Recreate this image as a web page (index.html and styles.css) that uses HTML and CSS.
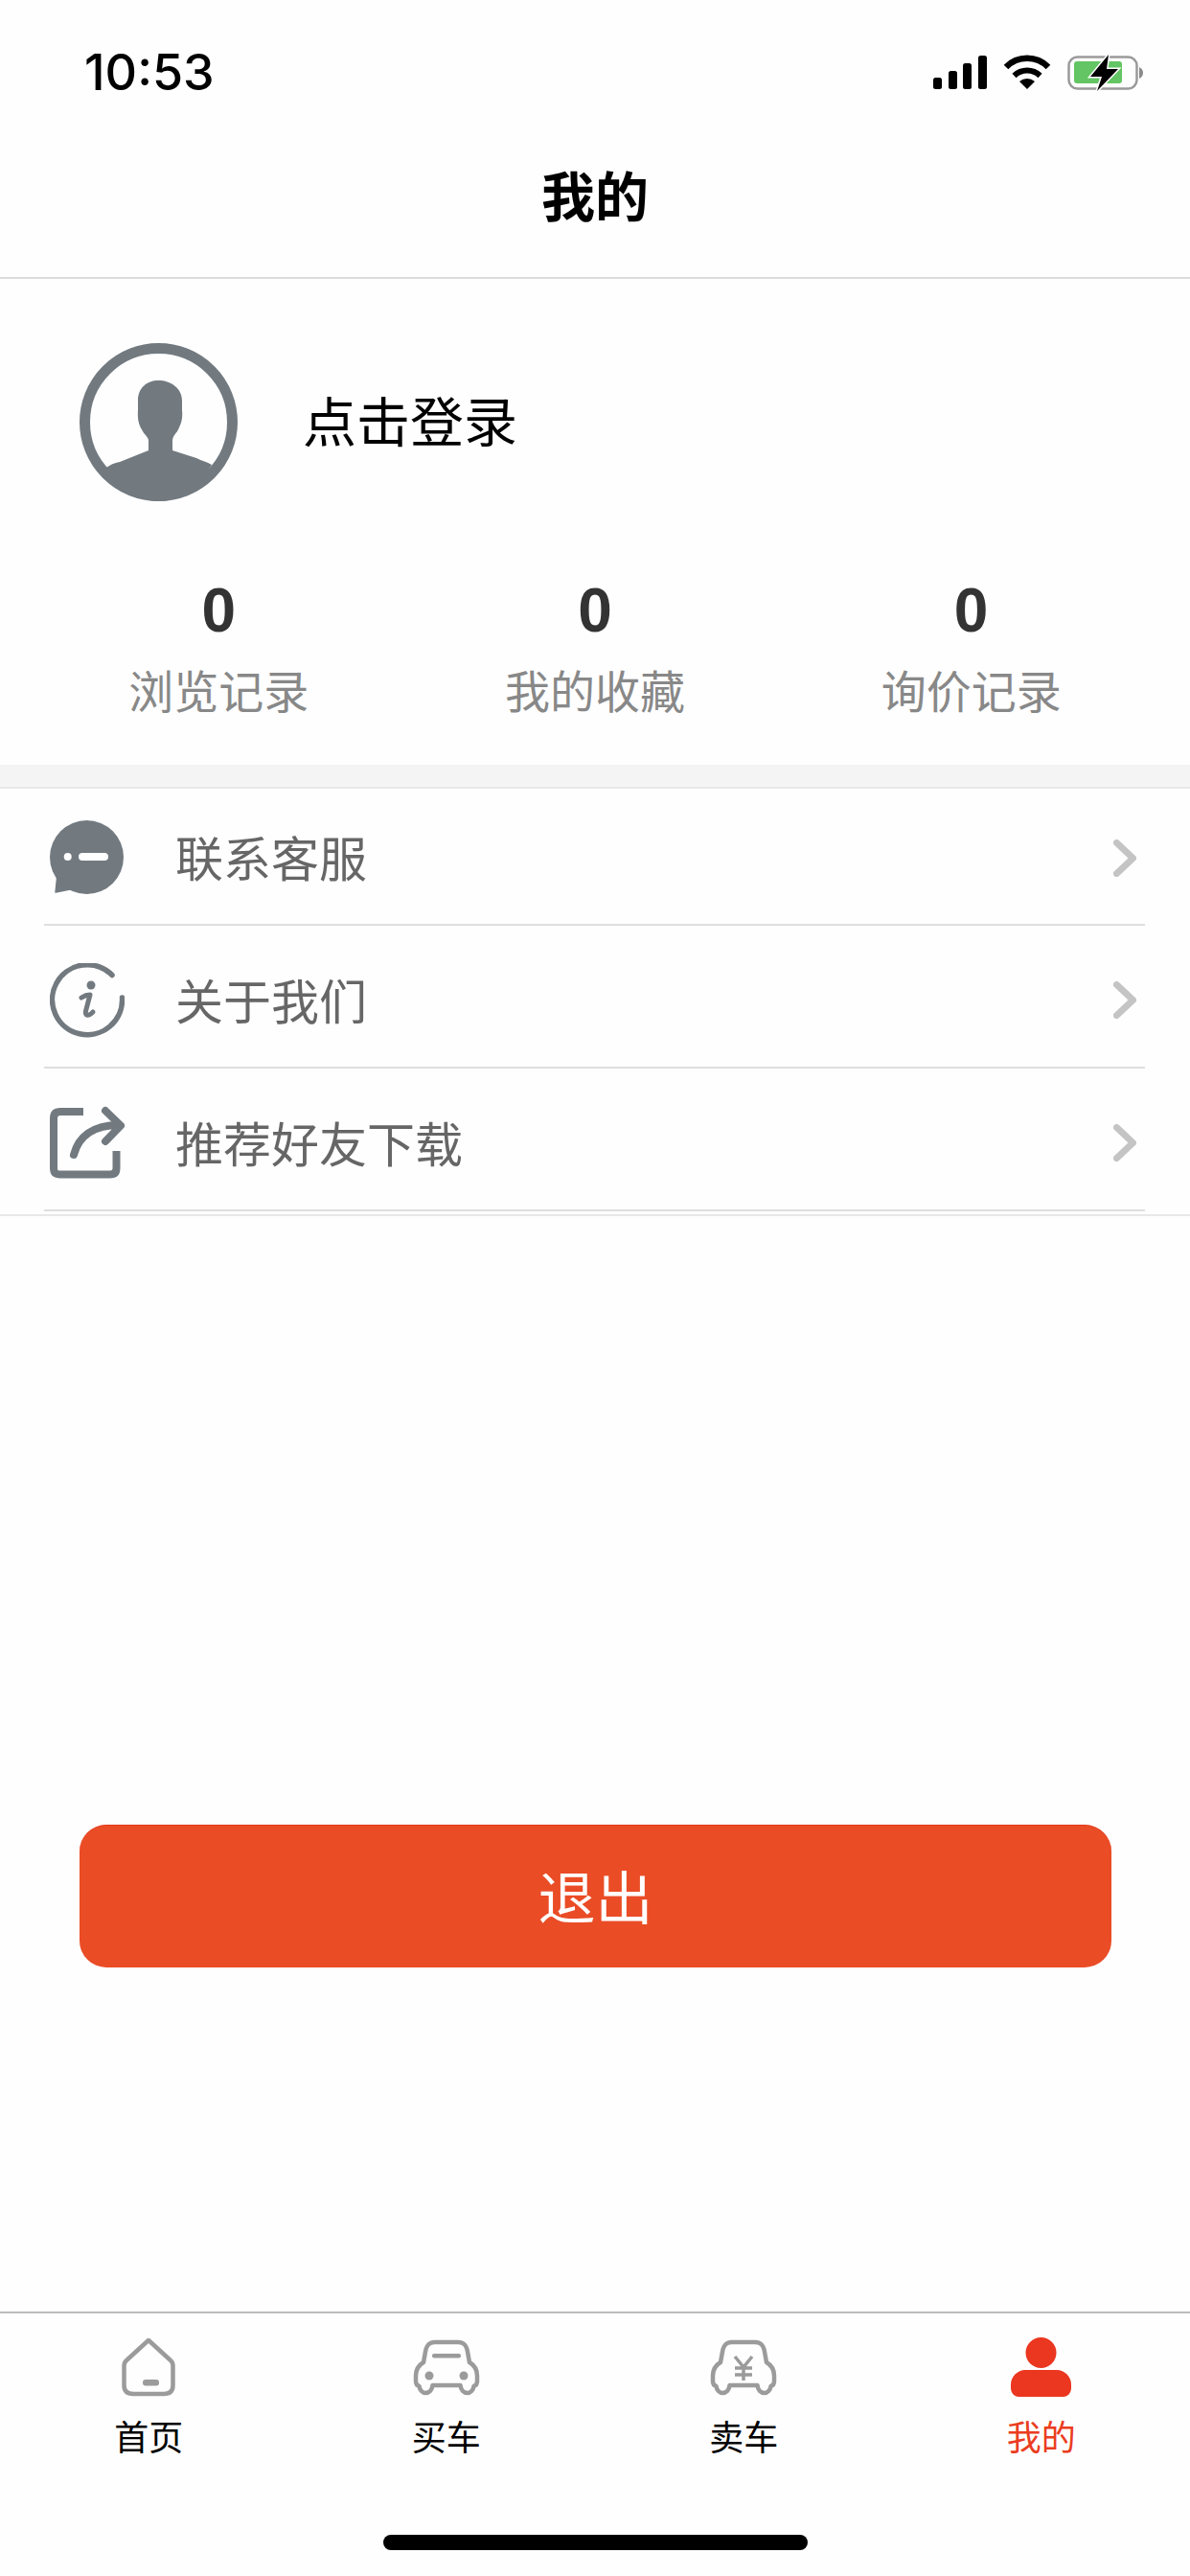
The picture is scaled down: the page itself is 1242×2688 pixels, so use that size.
FILE: index.html
```html
<!DOCTYPE html>
<html>

<head>
    <meta charset="utf-8">
    <link rel="stylesheet" href="styles.css">
</head>

<body>
    <div class="page">
        <!-- Status bar -->
        <div class="status-bar">
            <span class="status-time">10:53</span>
            <div class="status-icons">
                <svg width="56" height="38" viewBox="0 0 56 38">
                    <rect x="0" y="24" width="9" height="12" rx="2.5" />
                    <rect x="16" y="17" width="9" height="19" rx="2.5" />
                    <rect x="31" y="9" width="9" height="27" rx="2.5" />
                    <rect x="47" y="1" width="9" height="35" rx="2.5" />
                </svg>
                <svg width="50" height="38" viewBox="0 0 50 38">
                    <path d="M3 13A31 31 0 0 1 47 13" fill="none" stroke="#000" stroke-width="6.5" />
                    <path d="M11.5 22A19.5 19.5 0 0 1 38.5 22" fill="none" stroke="#000" stroke-width="6" />
                    <path d="M25 36L17 28A12 12 0 0 1 33 28Z" />
                </svg>
                <svg width="80" height="38" viewBox="0 0 80 38">
                    <rect x="1.5" y="2.5" width="71" height="33" rx="9" fill="none" stroke="#9a9a9a" stroke-width="2.5" />
                    <rect x="7" y="7" width="50" height="23" rx="3" fill="#63c563" />
                    <path d="M75 13Q79 15 79 19Q79 23 75 25Z" fill="#8a8a8a" />
                    <polygon points="43,0 24,23 36,23 31,38 53,15 41,15" stroke="#fff" stroke-width="3" paint-order="stroke" />
                </svg>
            </div>
        </div>

        <div class="nav-bar">我的</div>

        <!-- Login block -->
        <div class="profile">
            <svg class="avatar" width="165" height="165" viewBox="0 0 165 165">
                <circle cx="82.5" cy="82.5" r="77" fill="none" stroke="#727a80" stroke-width="11" />
                <path d="M82.5 39C70 39 61 47 61 60L61 70C60 84 64 88 66 92C68 96 72 98 72 102L72 112L42 124C36 125 32 127 28 130C45 152 65 165 82.5 165C105 165 122 152 138 127C133 124 128 123 122 120L97 112L97 102C97 96 102 94 104 88C106 84 108 78 107 70L107 60C107 47 95 39 82.5 39Z" fill="#727a80" />
            </svg>
            <span class="login-text">点击登录</span>
        </div>

        <div class="stats">
            <div class="stat">
                <div class="stat-num">0</div>
                <div class="stat-label">浏览记录</div>
            </div>
            <div class="stat">
                <div class="stat-num">0</div>
                <div class="stat-label">我的收藏</div>
            </div>
            <div class="stat">
                <div class="stat-num">0</div>
                <div class="stat-label">询价记录</div>
            </div>
        </div>

        <div class="band"></div>

        <!-- Menu -->
        <div class="menu">
            <div class="menu-row">
                <svg class="menu-icon" width="78" height="78" viewBox="0 0 78 78">
                    <circle cx="38.5" cy="38.5" r="38.5" fill="#727a80" />
                    <path d="M8 56L6 75L26 71Z" fill="#727a80" stroke="#727a80" stroke-width="1.5" stroke-linejoin="round" />
                    <circle cx="18.7" cy="38" r="4" fill="#fff" />
                    <rect x="30" y="34" width="31" height="8" rx="4" fill="#fff" />
                </svg>
                <span class="menu-text">联系客服</span>
                <svg class="chevron" width="24" height="39" viewBox="0 0 24 39">
                    <path d="M3.5 3.5L20.5 19.5L3.5 35.5" />
                </svg>
            </div>
            <div class="menu-row">
                <svg class="menu-icon" width="78" height="78" viewBox="0 0 78 78">
                    <path d="M75.5 36A36.5 36.5 0 1 1 65 12.5" fill="none" stroke="#727a80" stroke-width="5.5" stroke-linecap="round" />
                    <circle cx="43" cy="23" r="4.5" fill="#727a80" />
                    <path d="M33 36C36 34 39 33 42 33L37.5 50C36.5 55 40 56 45 51" fill="none" stroke="#727a80" stroke-width="5" stroke-linecap="round" stroke-linejoin="round" />
                </svg>
                <span class="menu-text">关于我们</span>
                <svg class="chevron" width="24" height="39" viewBox="0 0 24 39">
                    <path d="M3.5 3.5L20.5 19.5L3.5 35.5" />
                </svg>
            </div>
            <div class="menu-row">
                <svg class="menu-icon" width="78" height="78" viewBox="0 0 78 78">
                    <path d="M35 6H11Q4 6 4 13V65Q4 71.5 11 71.5H63Q69.5 71.5 69.5 65V47" fill="none" stroke="#727a80" stroke-width="8" />
                    <path d="M25 51C30 32 45 20 72 20M58 5L74 20.5L58 37" fill="none" stroke="#727a80" stroke-width="8" stroke-linecap="round" stroke-linejoin="round" />
                </svg>
                <span class="menu-text">推荐好友下载</span>
                <svg class="chevron" width="24" height="39" viewBox="0 0 24 39">
                    <path d="M3.5 3.5L20.5 19.5L3.5 35.5" />
                </svg>
            </div>
        </div>

        <button class="logout">退出</button>

        <!-- Bottom tabs -->
        <div class="tab-bar">
            <div class="tabs">
                <div class="tab">
                    <div class="tab-icon">
                        <svg width="56" height="62" viewBox="0 0 56 62">
                            <path d="M28 3L51 24Q53.5 26 53.5 30V50Q53.5 59 44 59H12Q2.5 59 2.5 50V30Q2.5 26 5 24Z" fill="none" stroke="#9b9b9b" stroke-width="4.5" stroke-linejoin="round" />
                            <rect x="22" y="44" width="17" height="6.5" rx="3" fill="#9b9b9b" />
                        </svg>
                    </div>
                    <span class="tab-label">首页</span>
                </div>
                <div class="tab">
                    <div class="tab-icon">
                        <svg width="70" height="59" viewBox="0 0 70 59">
                            <path d="M23 3H47C54 3 56 7 57 13L59 24C64 27 67 31 67 38L67 44C67 47 65 48.5 63.5 49C63 53 60 56 57 56C53 56 50 53 49.5 48H20.5C20 53 17 56 13 56C10 56 7 53 6.5 49C5 48.5 3 47 3 44L3 38C3 31 6 27 11 24L13 13C14 7 16 3 23 3Z" fill="none" stroke="#9b9b9b" stroke-width="4.5" stroke-linejoin="round" />
                            <rect x="20" y="15" width="30" height="4.5" rx="2" fill="#9b9b9b" />
                            <circle cx="17" cy="38" r="4.5" fill="#9b9b9b" />
                            <circle cx="53" cy="38" r="4.5" fill="#9b9b9b" />
                        </svg>
                    </div>
                    <span class="tab-label">买车</span>
                </div>
                <div class="tab">
                    <div class="tab-icon">
                        <svg width="70" height="59" viewBox="0 0 70 59">
                            <path d="M23 3H47C54 3 56 7 57 13L59 24C64 27 67 31 67 38L67 44C67 47 65 48.5 63.5 49C63 53 60 56 57 56C53 56 50 53 49.5 48H20.5C20 53 17 56 13 56C10 56 7 53 6.5 49C5 48.5 3 47 3 44L3 38C3 31 6 27 11 24L13 13C14 7 16 3 23 3Z" fill="none" stroke="#9b9b9b" stroke-width="4.5" stroke-linejoin="round" />
                            <path d="M26 18L35 29L44 18M26 30H44M26 37H44M35 29V43" fill="none" stroke="#9b9b9b" stroke-width="3.5" />
                        </svg>
                    </div>
                    <span class="tab-label">卖车</span>
                </div>
                <div class="tab tab-active">
                    <div class="tab-icon">
                        <svg width="63" height="62" viewBox="0 0 63 62">
                            <circle cx="31.5" cy="16" r="16" fill="#eb3620" />
                            <path d="M15 34H48C56 34 63 41 63 49V53C63 58 59 62 55 62H8C4 62 0 58 0 53V49C0 41 7 34 15 34Z" fill="#eb3620" />
                        </svg>
                    </div>
                    <span class="tab-label">我的</span>
                </div>
            </div>
            <div class="home-indicator"></div>
        </div>
    </div>
</body>

</html>
```

FILE: styles.css
```css
body {
    margin: 0;
    background-color: #fefefe;
    font-family: "Liberation Sans", "Noto Sans CJK SC", sans-serif;
}

.page {
    width: 1242px;
    height: 2688px;
    display: flex;
    flex-direction: column;
    overflow: hidden;
}

/* Status bar */
.status-bar {
    height: 116px;
    box-sizing: border-box;
    padding: 57px 48px 0 88px;
    display: flex;
    justify-content: space-between;
    align-items: flex-start;
}

.status-time {
    font-family: Inter, "Liberation Sans", sans-serif;
    font-size: 52px;
    font-weight: 500;
    line-height: 38px;
    color: #000;
}

.status-icons {
    display: flex;
    gap: 17px;
}

/* Nav */
.nav-bar {
    height: 175px;
    box-sizing: border-box;
    padding-bottom: 2px;
    border-bottom: 2px solid #dcdcdc;
    display: flex;
    align-items: center;
    justify-content: center;
    font-size: 56px;
    font-weight: 700;
    color: #000;
}

/* Profile */
.profile {
    padding: 67px 0 0 83px;
    display: flex;
    align-items: center;
    gap: 68px;
}

.avatar {
    display: block;
}

.login-text {
    padding-bottom: 9px;
    font-size: 56px;
    color: #000;
}

.stats {
    margin-top: 80px;
    padding: 0 32px 41px;
    display: grid;
    grid-template-columns: repeat(3, 1fr);
}

.stat {
    text-align: center;
}

.stat-num {
    font-size: 64px;
    font-weight: 700;
    line-height: 68px;
    color: #333;
}

.stat-label {
    margin-top: 18px;
    font-size: 47px;
    line-height: 68px;
    color: #888;
}

.band {
    height: 23px;
    background-color: #f4f4f4;
    border-bottom: 2px solid #e8e8e8;
}

/* Menu */
.menu {
    padding: 0 47px 3px 46px;
    border-bottom: 2px solid #e8e8e8;
}

.menu-row {
    height: 149px;
    box-sizing: border-box;
    padding: 8px 9px 0 6px;
    border-bottom: 2px solid #dedede;
    display: flex;
    align-items: center;
}

.menu-row:first-child {
    height: 143px;
    padding-top: 3px;
}

.menu-icon {
    display: block;
}

.menu-text {
    flex: 1;
    margin-left: 53px;
    padding-bottom: 4px;
    font-size: 50px;
    color: #666;
}

.chevron {
    display: block;
    fill: none;
    stroke: #c4c4c4;
    stroke-width: 7;
    stroke-linecap: round;
    stroke-linejoin: round;
}

/* Logout */
.logout {
    margin: 635px 82px 0 83px;
    height: 149px;
    box-sizing: border-box;
    padding: 0 0 6px;
    border: none;
    border-top: 1px solid #e2381a;
    border-radius: 28px;
    background-color: #ea4c26;
    color: #fff;
    font-family: inherit;
    font-size: 60px;
}

/* Tabs */
.tab-bar {
    margin-top: auto;
    height: 276px;
    box-sizing: border-box;
    border-top: 2px solid #bcbcbc;
}

.tabs {
    padding-top: 24px;
    display: grid;
    grid-template-columns: repeat(4, 1fr);
}

.tab {
    display: flex;
    flex-direction: column;
    align-items: center;
}

.tab-icon {
    height: 64px;
    display: flex;
    align-items: center;
    justify-content: center;
}

.tab-icon svg {
    display: block;
}

.tab-label {
    margin-top: 18px;
    font-size: 36px;
    line-height: 50px;
    color: #000;
}

.tab-active .tab-label {
    color: #eb3c20;
}

.home-indicator {
    width: 443px;
    height: 16px;
    margin: 75px auto 0;
    border-radius: 8px;
    background-color: #000;
}
```
